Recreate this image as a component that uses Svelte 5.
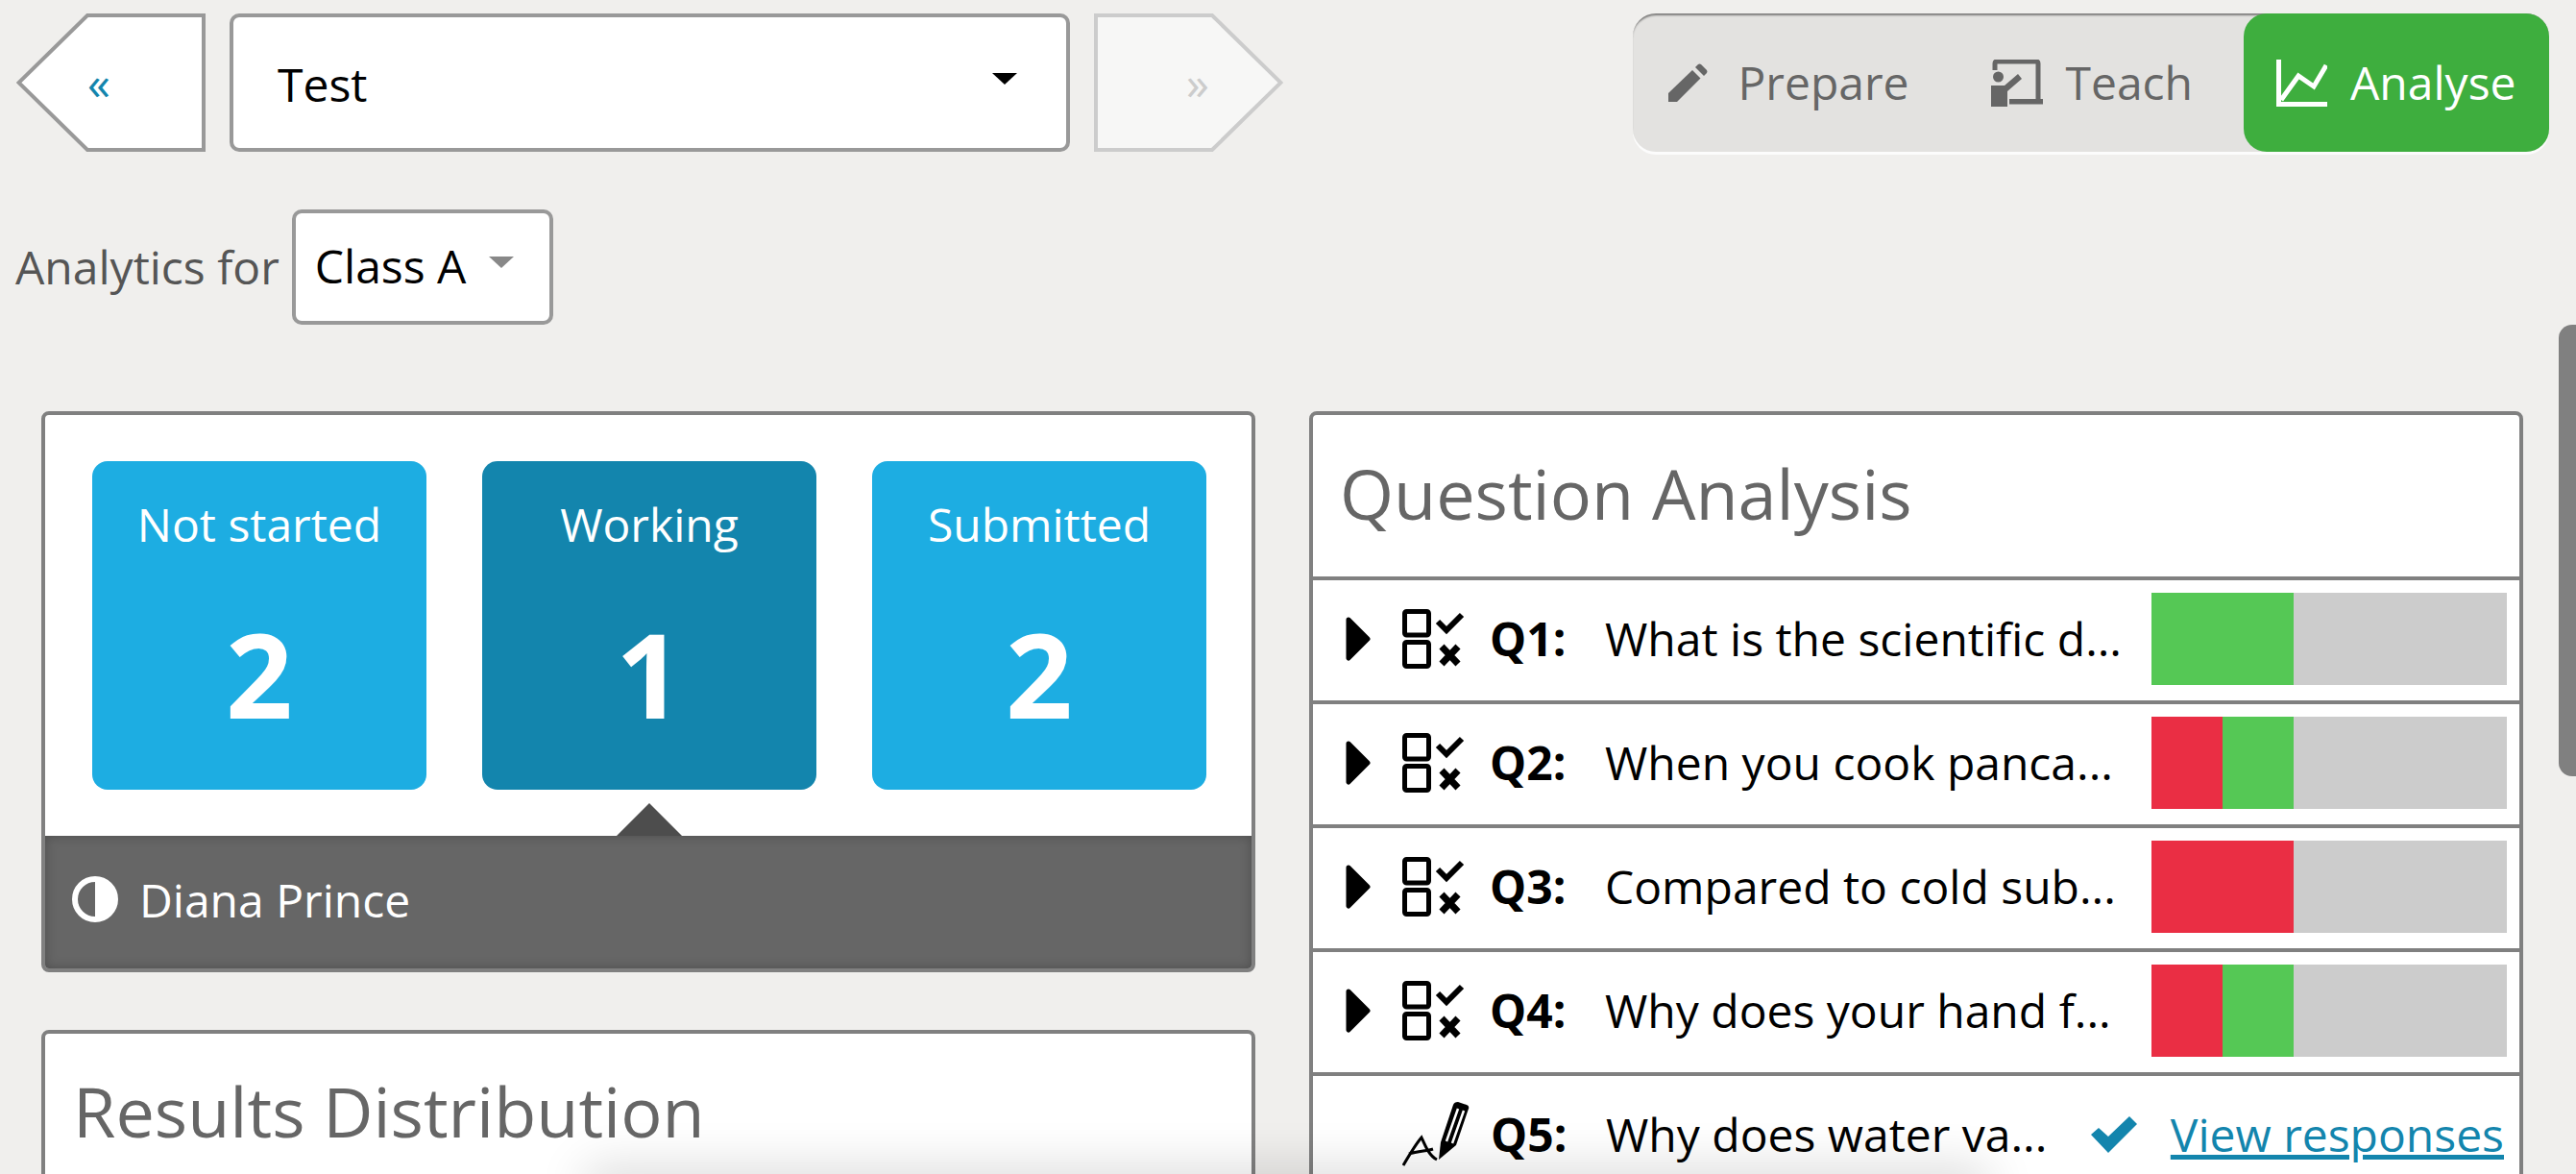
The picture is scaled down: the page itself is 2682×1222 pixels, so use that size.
<script>
  const statuses = [
    { label: 'Not started', count: 2 },
    { label: 'Working', count: 1, active: true },
    { label: 'Submitted', count: 2 }
  ];

  const questions = [
    { id: 'Q1', text: 'What is the scientific d...', red: 0, green: 40 },
    { id: 'Q2', text: 'When you cook panca...', red: 20, green: 20 },
    { id: 'Q3', text: 'Compared to cold sub...', red: 40, green: 0 },
    { id: 'Q4', text: 'Why does your hand f...', red: 20, green: 20 }
  ];
</script>

<div class="page">
  <header class="topbar">
    <div class="test-nav">
      <button class="step step-back">
        <svg class="step-shape" viewBox="0 0 197 144" preserveAspectRatio="none">
          <path d="M195 2H74L2.500 72L74 142H195Z" fill="#fff" stroke="#999" stroke-width="4"></path>
        </svg>
        <span>«</span>
      </button>
      <div class="select test-select">
        <span>Test</span>
        <i class="caret"></i>
      </div>
      <button class="step step-next">
        <svg class="step-shape" viewBox="0 0 197 144" preserveAspectRatio="none">
          <path d="M2 2H123L194.500 72L123 142H2Z" fill="#f7f7f6" stroke="#ccc" stroke-width="4"></path>
        </svg>
        <span>»</span>
      </button>
    </div>

    <nav class="modes">
      <div class="mode mode-prepare">
        <svg width="41" height="40" viewBox="0 0 41 40" fill="#666">
          <path d="M0 31L25 7L33.500 15.500L9 40H0Z"></path>
          <path d="M28 4L31 1Q32.500 0 34 1L40 7Q41 8.500 40 10L37 13Z"></path>
        </svg>
        Prepare
      </div>
      <div class="mode mode-teach">
        <svg width="54" height="49" viewBox="0 0 54 49" fill="#666">
          <path d="M4 11V4Q4 2 6 2H47Q49 2 49 4V41" fill="none" stroke="#666" stroke-width="5"></path>
          <circle cx="7.500" cy="18" r="5.500"></circle>
          <path d="M0 27H14L28 15L32 20L17 33V49H0Z"></path>
          <rect x="19" y="41" width="35" height="5.500"></rect>
        </svg>
        Teach
      </div>
      <div class="mode mode-analyse">
        <svg width="53" height="49" viewBox="0 0 53 49" fill="none" stroke="#fff" stroke-width="5">
          <path d="M2.500 0V46.500H53"></path>
          <path d="M5 42L23 17L39 28L52 6"></path>
        </svg>
        Analyse
      </div>
    </nav>
  </header>

  <div class="class-row">
    <span class="class-label">Analytics for</span>
    <div class="select class-select">
      <span>Class A</span>
      <i class="caret"></i>
    </div>
  </div>

  <main class="columns">
    <div class="column">
      <section class="panel">
        <div class="tiles">
          {#each statuses as s}
            <div class="tile" class:active={s.active}>
              <div class="tile-label">{s.label}</div>
              <div class="tile-count">{s.count}</div>
            </div>
          {/each}
        </div>
        <div class="student-bar">
          <i class="pointer"></i>
          <svg width="48" height="48" viewBox="0 0 48 48">
            <circle cx="24" cy="24" r="21" fill="none" stroke="#fff" stroke-width="6"></circle>
            <path d="M24 3A21 21 0 0 1 24 45Z" fill="#fff"></path>
          </svg>
          <span>Diana Prince</span>
        </div>
      </section>

      <section class="panel">
        <h2 class="results-title">Results Distribution</h2>
      </section>
    </div>

    <div class="column">
      <section class="panel">
        <h2 class="analysis-title">Question Analysis</h2>

        {#each questions as q}
          <div class="row">
            <svg class="expand" width="26" height="46" viewBox="0 0 26 46">
              <path d="M3 3L23 23L3 43Z" fill="#000" stroke="#000" stroke-width="5" stroke-linejoin="round"></path>
            </svg>
            <svg class="type-icon" width="65" height="62" viewBox="0 0 65 62" fill="none" stroke="#000">
              <rect x="2.500" y="2.500" width="25" height="24.500" rx="2" stroke-width="5"></rect>
              <rect x="2.500" y="34.500" width="25" height="25" rx="2" stroke-width="5"></rect>
              <path d="M37 13L46 22L62 6" stroke-width="6"></path>
              <path d="M41 39L58 57M58 39L41 57" stroke-width="7"></path>
            </svg>
            <b class="q-id">{q.id}:</b>
            <span class="q-text">{q.text}</span>
            <div class="bar">
              <div class="bar-red" style="width: {q.red}%"></div>
              <div class="bar-green" style="width: {q.green}%"></div>
            </div>
          </div>
        {/each}

        <div class="row row-open">
          <svg class="type-icon" width="70" height="67" viewBox="0 0 70 67">
            <path d="M1 66C8 54 14 44 20 37C24 46 28 56 36 60M7 54C16 51 26 51 32 49" fill="none" stroke="#000" stroke-width="3"></path>
            <path d="M38 60L40 42L53 3Q54 0 58 0L67 3Q70 4 69 7L56 45Z" fill="#000"></path>
            <path d="M46 41L58 7M52 43L64 9" stroke="#fff" stroke-width="2.500"></path>
          </svg>
          <b class="q-id">Q5:</b>
          <span class="q-text">Why does water va...</span>
          <svg class="tick" width="48" height="38" viewBox="0 0 48 38">
            <path d="M0 19L8 12L18 21L40 0L48 8L18 38Z" fill="#1385ad"></path>
          </svg>
          <a class="responses" href="#responses">View responses</a>
        </div>
      </section>
    </div>
  </main>

  <div class="scroll-thumb"></div>
  <div class="bottom-shade"></div>
</div>

<style>
  :global(body) {
    margin: 0;
    background: #f0efed;
  }

  .page {
    position: relative;
    width: 2682px;
    height: 1222px;
    overflow: hidden;
    background: #f0efed;
    font-family: "Open Sans", sans-serif;
    font-size: 48px;
    color: #000;
  }

  .topbar {
    display: flex;
    justify-content: space-between;
    padding: 14px 28px 0 17px;
  }

  .test-nav {
    display: flex;
    gap: 25px;
  }

  .step {
    position: relative;
    width: 197px;
    height: 144px;
    padding: 0;
    border: 0;
    background: none;
    font-family: inherit;
    font-size: 48px;
    line-height: 1;
  }

  .step-shape {
    position: absolute;
    top: 0;
    left: 0;
    width: 100%;
    height: 100%;
  }

  .step span {
    position: relative;
  }

  .step-back {
    color: #1385ad;
    text-align: left;
    padding-left: 74px;
  }

  .step-next {
    color: #ccc;
    text-align: left;
    padding-left: 96px;
  }

  .select {
    display: flex;
    box-sizing: border-box;
    align-items: center;
    background: #fff;
    border: 4px solid #999;
    border-radius: 10px;
  }

  .test-select {
    width: 875px;
    height: 144px;
    padding: 2px 51px 0 46px;
    justify-content: space-between;
  }

  .caret {
    width: 0;
    height: 0;
    margin-top: -10px;
    border-left: 13px solid transparent;
    border-right: 13px solid transparent;
    border-top: 12px solid #000;
  }

  .modes {
    display: flex;
    height: 144px;
    background: #e3e2e0;
    border-radius: 24px;
    box-shadow: inset 0 3px 2px -1px rgba(0, 0, 0, 0.45), 0 3px 0 rgba(255, 255, 255, 0.8);
    color: #666;
  }

  .mode {
    display: flex;
    align-items: center;
    height: 144px;
    box-sizing: border-box;
    line-height: 1;
  }

  .mode-prepare {
    gap: 31px;
    padding-left: 37px;
    padding-right: 41px;
  }

  .mode-teach {
    gap: 24px;
    padding-left: 44px;
    padding-right: 53px;
  }

  .mode-analyse {
    gap: 24px;
    width: 318px;
    padding-left: 34px;
    background: #3eae3e;
    border-radius: 24px;
    color: #fff;
  }

  .class-row {
    display: flex;
    align-items: center;
    gap: 13px;
    margin-top: 60px;
    padding-left: 16px;
  }

  .class-label {
    padding-bottom: 2px;
    color: #555;
  }

  .class-select {
    width: 272px;
    height: 120px;
    padding: 0 0 3px 20px;
    gap: 24px;
  }

  .class-select .caret {
    border-top-color: #888;
    margin-top: -8px;
  }

  .columns {
    display: flex;
    gap: 56px;
    margin-top: 90px;
    padding-left: 43px;
  }

  .column {
    display: flex;
    flex-direction: column;
    gap: 60px;
    width: 1264px;
  }

  .panel {
    background: #fff;
    border: 4px solid #808080;
    border-radius: 8px;
    overflow: hidden;
  }

  .tiles {
    display: grid;
    grid-template-columns: repeat(3, 348px);
    gap: 58px;
    padding: 48px 46px 48px 49px;
  }

  .tile {
    display: flex;
    flex-direction: column;
    align-items: center;
    height: 342px;
    background: #1dade2;
    border-radius: 16px;
    color: #fff;
  }

  .tile.active {
    background: #1385ad;
  }

  .tile-label {
    margin-top: 33px;
    line-height: 66px;
  }

  .tile-count {
    margin-top: 39px;
    font-size: 122px;
    font-weight: 700;
    line-height: 166px;
  }

  .student-bar {
    position: relative;
    display: flex;
    align-items: center;
    gap: 22px;
    height: 138px;
    box-sizing: border-box;
    padding: 0 0 6px 28px;
    background: #666;
    box-shadow: inset 0 0 12px rgba(0, 0, 0, 0.25);
    color: #fff;
  }

  .pointer {
    position: absolute;
    top: -34px;
    left: 595px;
    width: 0;
    height: 0;
    border-left: 34px solid transparent;
    border-right: 34px solid transparent;
    border-bottom: 34px solid #4d4d4d;
  }

  .results-title,
  .analysis-title {
    margin: 0;
    color: #666;
    font-size: 72px;
    font-weight: 400;
    line-height: 92px;
  }

  .results-title {
    padding: 34px 29px 100px;
  }

  .analysis-title {
    height: 168px;
    box-sizing: border-box;
    padding: 35px 28px 0;
  }

  .row {
    display: flex;
    align-items: center;
    box-sizing: border-box;
    height: 129px;
    padding: 0 13px 4px 34px;
    border-top: 4px solid #808080;
  }

  .expand {
    flex: none;
    margin-right: 33px;
  }

  .type-icon {
    flex: none;
  }

  .q-id {
    flex: none;
    width: 120px;
    margin-left: 26px;
  }

  .q-text {
    flex: 1;
    white-space: nowrap;
  }

  .bar {
    display: flex;
    flex: none;
    width: 370px;
    height: 96px;
    background: #ccc;
  }

  .bar-red {
    background: #ea2e44;
  }

  .bar-green {
    background: #55c855;
  }

  .row-open {
    padding-left: 93px;
    padding-right: 16px;
  }

  .row-open .q-id {
    margin-left: 22px;
  }

  .tick {
    flex: none;
    margin-right: 35px;
  }

  .responses {
    color: #1385ad;
    text-decoration-thickness: 5px;
  }

  .scroll-thumb {
    position: absolute;
    top: 338px;
    right: 0;
    width: 18px;
    height: 470px;
    background: #808080;
    border-radius: 14px 0 0 14px;
  }

  .bottom-shade {
    position: absolute;
    top: 1226px;
    left: 620px;
    width: 1440px;
    height: 20px;
    box-shadow: 0 0 50px 10px rgba(0, 0, 0, 0.16);
  }
</style>
